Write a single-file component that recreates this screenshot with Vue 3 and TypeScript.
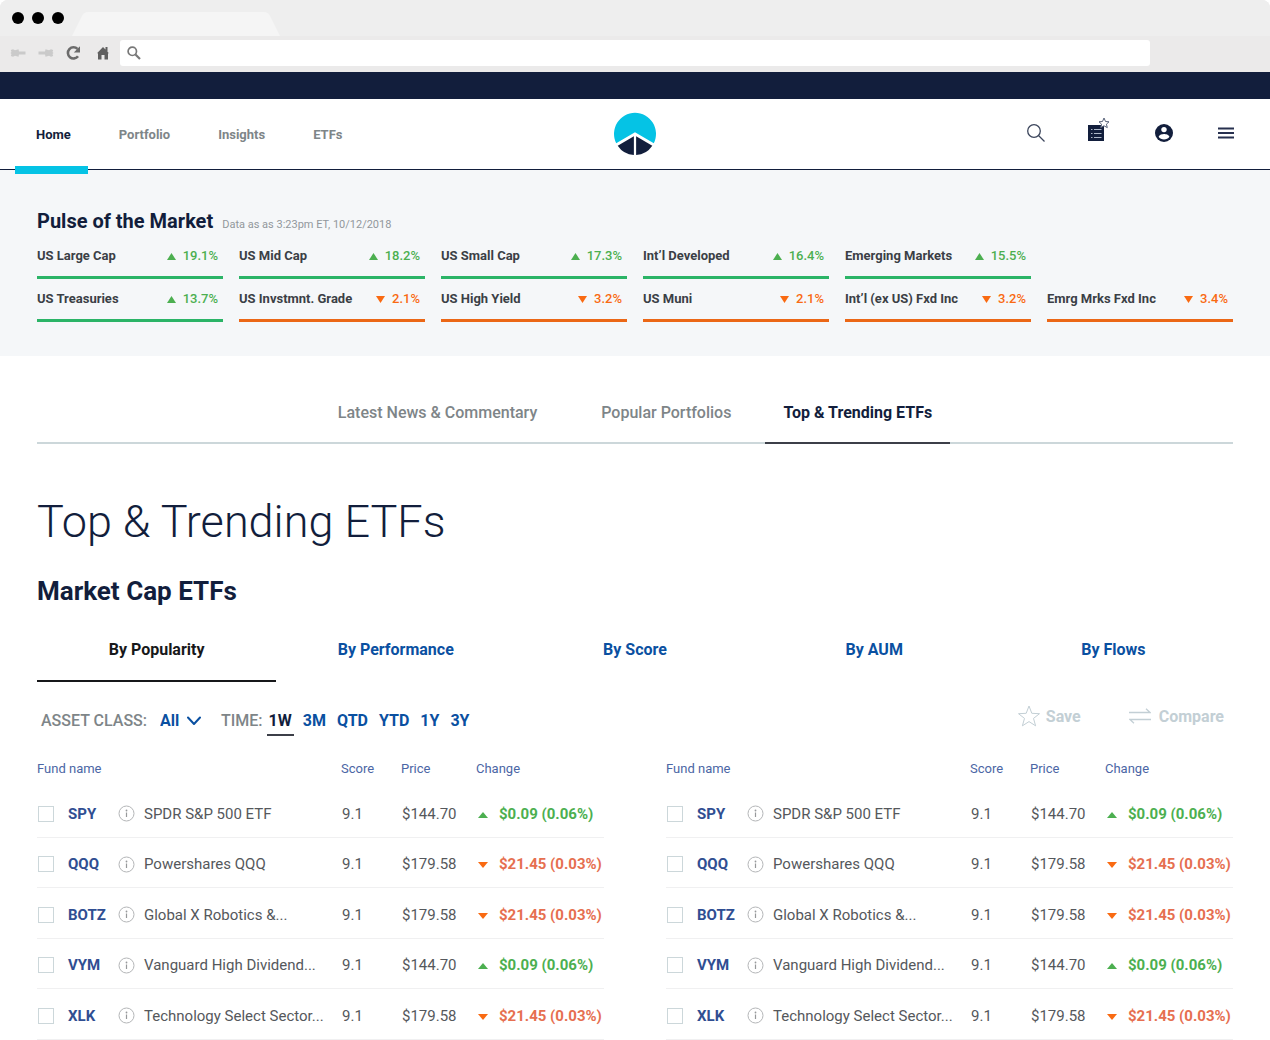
<script setup lang="ts">
import { ref } from 'vue'

interface Market {
  name: string
  change: string
  up: boolean
}

interface Fund {
  ticker: string
  name: string
  score: string
  price: string
  change: string
  up: boolean
}

const navItems = ['Home', 'Portfolio', 'Insights', 'ETFs']
const sections = ['Latest News & Commentary', 'Popular Portfolios', 'Top & Trending ETFs']
const rankings = ['By Popularity', 'By Performance', 'By Score', 'By AUM', 'By Flows']
const periods = ['1W', '3M', 'QTD', 'YTD', '1Y', '3Y']

const activeSection = ref(sections[2])
const activeRanking = ref(rankings[0])
const activePeriod = ref(periods[0])
const assetClass = ref('All')
const address = ref('')

const equityMarkets: Market[] = [
  { name: 'US Large Cap', change: '19.1%', up: true },
  { name: 'US Mid Cap', change: '18.2%', up: true },
  { name: 'US Small Cap', change: '17.3%', up: true },
  { name: 'Int’l Developed', change: '16.4%', up: true },
  { name: 'Emerging Markets', change: '15.5%', up: true },
]

const bondMarkets: Market[] = [
  { name: 'US Treasuries', change: '13.7%', up: true },
  { name: 'US Invstmnt. Grade', change: '2.1%', up: false },
  { name: 'US High Yield', change: '3.2%', up: false },
  { name: 'US Muni', change: '2.1%', up: false },
  { name: 'Int’l (ex US) Fxd Inc', change: '3.2%', up: false },
  { name: 'Emrg Mrks Fxd Inc', change: '3.4%', up: false },
]

const gain = { score: '9.1', price: '$144.70', change: '$0.09 (0.06%)', up: true }
const loss = { score: '9.1', price: '$179.58', change: '$21.45 (0.03%)', up: false }

const funds: Fund[] = [
  { ticker: 'SPY', name: 'SPDR S&P 500 ETF', ...gain },
  { ticker: 'QQQ', name: 'Powershares QQQ', ...loss },
  { ticker: 'BOTZ', name: 'Global X Robotics &...', ...loss },
  { ticker: 'VYM', name: 'Vanguard High Dividend...', ...gain },
  { ticker: 'XLK', name: 'Technology Select Sector...', ...loss },
]

const tables = [funds, funds]
</script>

<template>
  <div class="window">
    <div class="chrome">
      <div class="tab-strip">
        <span class="dot"></span>
        <span class="dot"></span>
        <span class="dot"></span>
        <svg class="browser-tab" width="208" height="24" viewBox="0 0 208 24" aria-hidden="true">
          <path d="M0 24 10 4Q12 0 16 0H192Q196 0 198 4L208 24Z" fill="#f5f5f5" />
        </svg>
      </div>
      <div class="toolbar">
        <button class="tool" aria-label="Back">
          <svg width="16" height="10" viewBox="0 0 16 10"><path d="M.5 5 1.500 4 .8 2 3 1.200 5 2.200 8.500 1.200 9 3.500H15.500V6.500H9L8.500 8.800 5 7.800 3 8.800.8 8 1.500 6Z" fill="#cacaca" /></svg>
        </button>
        <button class="tool" aria-label="Forward">
          <svg width="16" height="10" viewBox="0 0 16 10"><path d="M15.500 5 14.500 4 15.200 2 13 1.200 11 2.200 7.500 1.200 7 3.500H.5V6.500H7L7.500 8.800 11 7.800 13 8.800 15.200 8 14.500 6Z" fill="#cacaca" /></svg>
        </button>
        <button class="tool" aria-label="Reload">
          <svg width="16" height="16" viewBox="0 0 16 16">
            <path d="M12 11.200A5.600 5.600 0 1 1 11.500 3.900" fill="none" stroke="#6b6b6b" stroke-width="2.600" />
            <path d="M14 1.200V7.400H7.800Z" fill="#6b6b6b" />
          </svg>
        </button>
        <button class="tool home" aria-label="Home page">
          <svg width="12" height="14" viewBox="0 0 12 14"><path d="M6 1 8.500 3.600V1H10.500V5.700L12 7.200H11V13.500H7.500V9H4.500V13.500H1V7.200H0Z" fill="#606060" /></svg>
        </button>
        <label class="address">
          <svg width="14" height="14" viewBox="0 0 14 14" aria-hidden="true">
            <circle cx="5.300" cy="5.300" r="4.200" fill="none" stroke="#787878" stroke-width="1.700" />
            <path d="M8.500 8.500 13 13" stroke="#787878" stroke-width="2.200" />
          </svg>
          <input v-model="address" type="text" aria-label="Address" />
        </label>
      </div>
    </div>

    <div class="brand-bar"></div>

    <header class="site-header">
      <nav class="main-nav">
        <a v-for="(item, i) in navItems" :key="item" href="#" :class="['nav-link', { active: i === 0 }]">{{ item }}</a>
      </nav>
      <a class="logo" href="#" aria-label="Home">
        <svg width="44" height="44" viewBox="0 0 44 44">
          <path d="M3.200 31.200A21 21 0 1 1 40.800 31.200L22 20.300Z" fill="#05c3e5" />
          <path d="M4.700 33.700 20.900 24.300V43A21 21 0 0 1 4.700 33.700Z" fill="#121e3c" />
          <path d="M39.300 33.700 23.100 24.300V43A21 21 0 0 0 39.300 33.700Z" fill="#121e3c" />
        </svg>
      </a>
      <div class="header-tools">
        <button class="search" aria-label="Search">
          <svg width="20" height="20" viewBox="0 0 20 20" fill="none" stroke="#3c465c" stroke-width="1.300">
            <circle cx="8" cy="8" r="6.300" /><path d="M12.500 12.500 18.500 18.500" />
          </svg>
        </button>
        <button aria-label="Watchlist">
          <svg width="22" height="32" viewBox="0 0 22 32">
            <path d="M0 8H16V24H0Z" fill="#121e3c" />
            <path d="M3 12.500H4.500M6 12.500H13.500M3 16.500H4.500M6 16.500H13.500M3 20.500H4.500M6 20.500H13.500" stroke="#aeb8c9" stroke-width="1" />
            <path d="M16 1 17.500 4.500 21 4.800 18.400 7.200 19.300 10.600 16 8.800 12.700 10.600 13.600 7.200 11 4.800 14.500 4.500Z" fill="#fff" stroke="#59637a" />
          </svg>
        </button>
        <button aria-label="Account">
          <svg width="18" height="18" viewBox="0 0 18 18">
            <circle cx="9" cy="9" r="9" fill="#121e3c" />
            <circle cx="9" cy="5.600" r="2.700" fill="#fff" />
            <path d="M3.600 12.700C4.200 10.500 7.300 9.900 9 9.900S13.800 10.500 14.400 12.700A6.500 6.500 0 0 1 3.600 12.700Z" fill="#fff" />
          </svg>
        </button>
        <button aria-label="Menu">
          <svg width="16" height="12" viewBox="0 0 16 12"><path d="M0 1.500H16M0 6H16M0 10.500H16" stroke="#27304f" stroke-width="1.800" /></svg>
        </button>
      </div>
    </header>

    <section class="pulse">
      <div class="pulse-head">
        <h2>Pulse of the Market</h2>
        <p>Data as as 3:23pm ET, 10/12/2018</p>
      </div>
      <div v-for="(group, g) in [equityMarkets, bondMarkets]" :key="g" class="market-row">
        <div v-for="m in group" :key="m.name" :class="['market', m.up ? 'up' : 'down']">
          <span class="market-name">{{ m.name }}</span>
          <span class="market-change">
            <svg width="9" height="8" viewBox="0 0 9 8" aria-hidden="true">
              <path :d="m.up ? 'M0 8 4.500 1 9 8Z' : 'M0 1 4.500 8 9 1Z'" fill="currentColor" />
            </svg>
            {{ m.change }}
          </span>
        </div>
      </div>
    </section>

    <main class="content">
      <div class="section-tabs">
        <button
          v-for="s in sections"
          :key="s"
          :class="['section-tab', { active: s === activeSection }]"
          @click="activeSection = s"
        >{{ s }}</button>
      </div>

      <h1>Top &amp; Trending ETFs</h1>
      <h2 class="subtitle">Market Cap ETFs</h2>

      <div class="rankings">
        <button
          v-for="r in rankings"
          :key="r"
          :class="['ranking', { active: r === activeRanking }]"
          @click="activeRanking = r"
        >{{ r }}</button>
      </div>

      <div class="controls">
        <div class="filters">
          <label class="filter-label" for="asset-class">ASSET CLASS:</label>
          <div class="asset-select">
            <select id="asset-class" v-model="assetClass">
              <option>All</option>
            </select>
            <svg width="14" height="10" viewBox="0 0 14 10" aria-hidden="true">
              <path d="M1 1.500 7 8 13 1.500" fill="none" stroke="#0a50a1" stroke-width="2" stroke-linecap="round" stroke-linejoin="round" />
            </svg>
          </div>
          <span class="filter-label">TIME:</span>
          <div class="periods">
            <button
              v-for="p in periods"
              :key="p"
              :class="['period', { active: p === activePeriod }]"
              @click="activePeriod = p"
            >{{ p }}</button>
          </div>
        </div>
        <div class="actions">
          <button>
            <svg width="22" height="22" viewBox="0 0 22 22" fill="none" stroke="#c3cfd5">
              <path d="M11 1 13.800 8.300 21.500 8.700 15.500 13.400 17.600 20.800 11 16.600 4.400 20.800 6.500 13.400.5 8.700 8.200 8.300Z" />
            </svg>
            Save
          </button>
          <button class="compare">
            <svg width="22" height="16" viewBox="0 0 22 16" fill="none" stroke="#c3cfd5" stroke-width="1.300">
              <path d="M0 4.500H21L17 .8M22 11.500H1L5 15.200" />
            </svg>
            Compare
          </button>
        </div>
      </div>

      <div class="tables">
        <table v-for="(rows, t) in tables" :key="t">
          <colgroup>
            <col class="c-check" /><col class="c-ticker" /><col class="c-name" />
            <col class="c-score" /><col class="c-price" /><col class="c-change" />
          </colgroup>
          <thead>
            <tr>
              <th colspan="3" scope="col">Fund name</th>
              <th scope="col">Score</th>
              <th scope="col">Price</th>
              <th scope="col">Change</th>
            </tr>
          </thead>
          <tbody>
            <tr v-for="f in rows" :key="f.ticker">
              <td><input type="checkbox" :aria-label="`Select ${f.ticker}`" /></td>
              <td><a class="ticker" href="#">{{ f.ticker }}</a></td>
              <td>
                <div class="fund">
                  <button :aria-label="`About ${f.name}`">
                    <svg width="17" height="17" viewBox="0 0 17 17">
                      <circle cx="8.500" cy="8.500" r="7.500" fill="none" stroke="#b4b6b8" />
                      <path d="M8.500 7.500V12" stroke="#97999b" stroke-width="1.200" />
                      <circle cx="8.500" cy="5.500" r=".9" fill="#97999b" />
                    </svg>
                  </button>
                  <span>{{ f.name }}</span>
                </div>
              </td>
              <td class="num">{{ f.score }}</td>
              <td class="num">{{ f.price }}</td>
              <td>
                <div :class="['change', f.up ? 'up' : 'down']">
                  <svg width="12" height="10" viewBox="0 0 12 10" aria-hidden="true">
                    <path :d="f.up ? 'M1 9 6 3 11 9Z' : 'M1 3 6 9 11 3Z'" />
                  </svg>
                  {{ f.change }}
                </div>
              </td>
            </tr>
          </tbody>
        </table>
      </div>
    </main>
  </div>
</template>

<style>
body {
  margin: 0;
  background: #fff;
}
</style>

<style scoped>
.window {
  font-family: Roboto, "Liberation Sans", sans-serif;
  color: #121e3c;
}
.window * {
  box-sizing: border-box;
}
button,
select,
input {
  font: inherit;
  color: inherit;
  background: none;
  border: 0;
  padding: 0;
  margin: 0;
}
button {
  cursor: pointer;
}
a {
  color: inherit;
  text-decoration: none;
}
svg {
  display: block;
  flex: none;
}
h1,
h2,
p {
  margin: 0;
}

/* browser frame */
.chrome {
  background: #ebeaea;
  border-radius: 8px 8px 0 0;
}
.tab-strip {
  display: flex;
  align-items: center;
  gap: 8px;
  height: 36px;
  padding-left: 12px;
  background: #eeeeee;
  border-radius: 8px 8px 0 0;
}
.dot {
  width: 12px;
  height: 12px;
  border-radius: 50%;
  background: #000;
}
.browser-tab {
  align-self: flex-end;
}
.toolbar {
  display: flex;
  align-items: center;
  height: 36px;
  gap: 12px;
  padding: 0 120px 2px 10px;
}
.home {
  margin: 0 -1px 0 3px;
}
.address {
  display: flex;
  align-items: center;
  gap: 8px;
  flex: 1;
  height: 26px;
  padding: 0 7px;
  background: #fff;
  border-radius: 3px;
}
.address input {
  flex: 1;
  font-size: 13px;
  outline: 0;
}

/* site header */
.brand-bar {
  height: 27px;
  background: #121e3c;
}
.site-header {
  display: grid;
  grid-template-columns: 1fr auto 1fr;
  align-items: center;
  height: 71px;
  border-bottom: 1px solid #121e3c;
}
.main-nav {
  display: flex;
  gap: 10px;
  height: 70px;
  padding-left: 15px;
}
.nav-link {
  position: relative;
  padding: 0 17px 0 21px;
  font-size: 13px;
  font-weight: 700;
  line-height: 72px;
  color: #7e8588;
}
.nav-link.active {
  color: #121e3c;
}
.nav-link.active::after {
  content: "";
  position: absolute;
  left: 0;
  right: 0;
  bottom: -5px;
  height: 8px;
  background: #05c3e5;
}
.header-tools {
  display: flex;
  justify-content: flex-end;
  align-items: center;
  gap: 45px;
  padding: 0 36px 2px 0;
}
.search {
  margin-right: -3px;
}

/* market summary */
.pulse {
  padding: 39px 37px 34px;
  background: #f5f7f9;
}
.pulse-head {
  display: flex;
  align-items: baseline;
  gap: 9px;
  margin-bottom: 15px;
}
.pulse-head h2 {
  font-size: 20px;
  line-height: 24px;
}
.pulse-head p {
  font-size: 11px;
  color: #92979c;
}
.market-row {
  display: grid;
  grid-template-columns: repeat(6, 1fr);
  gap: 16px;
}
.market-row + .market-row {
  margin-top: 12px;
}
.market {
  display: flex;
  justify-content: space-between;
  padding: 0 5px 12px 0;
  border-bottom: 3px solid;
  font-size: 13px;
  line-height: 16px;
  white-space: nowrap;
}
.market.up {
  border-color: #2bb467;
}
.market.down {
  border-color: #eb6716;
}
.market-name {
  font-weight: 700;
  color: #3b3f46;
}
.market-change {
  display: flex;
  align-items: center;
  gap: 7px;
  font-weight: 500;
}
.up {
  color: #4caf50;
}
.down {
  color: #f96a12;
}

/* main content */
.content {
  padding: 36px 37px 0;
}
.section-tabs {
  display: flex;
  justify-content: center;
  gap: 16px;
  border-bottom: 2px solid #ccd7da;
}
.section-tab {
  margin-bottom: -2px;
  padding: 11px 18px 19px;
  border-bottom: 2px solid transparent;
  font-size: 16px;
  font-weight: 500;
  line-height: 20px;
  color: #7e8588;
}
.section-tab:first-child {
  margin-right: 12px;
}
.section-tab.active {
  border-color: #3c3f48;
  font-weight: 700;
  color: #121e3c;
}
h1 {
  margin-top: 50px;
  font-size: 45px;
  font-weight: 300;
  line-height: 56px;
}
.subtitle {
  margin-top: 25px;
  font-size: 26px;
  line-height: 32px;
}
.rankings {
  display: grid;
  grid-template-columns: repeat(5, 1fr);
  margin-top: 33px;
}
.ranking {
  padding-bottom: 20px;
  border-bottom: 2px solid transparent;
  font-size: 16px;
  font-weight: 700;
  line-height: 20px;
  color: #0a50a1;
}
.ranking.active {
  border-color: #17181a;
  color: #17181a;
}
.controls {
  display: flex;
  justify-content: space-between;
  height: 33px;
  margin-top: 21px;
}
.filters {
  display: flex;
  align-items: flex-end;
  padding-left: 4px;
  font-size: 16px;
  line-height: 26px;
  font-weight: 700;
}
.filter-label {
  padding-bottom: 2px;
  font-weight: 500;
  color: #7e8588;
}
.asset-select {
  display: flex;
  align-items: center;
  margin: 0 20px 2px 13px;
  color: #0a50a1;
}
.asset-select select {
  width: 41px;
  height: 26px;
  margin-right: -14px;
  appearance: none;
}
.asset-select svg {
  pointer-events: none;
}
.periods {
  display: flex;
  gap: 7px;
  margin-left: 4px;
}
.period {
  padding: 0 2px;
  border-bottom: 2px solid transparent;
  color: #0a50a1;
}
.period.active {
  border-color: #3c3f48;
  color: #121e3c;
}
.actions {
  display: flex;
  gap: 48px;
  height: 26px;
  padding-right: 9px;
}
.actions button {
  display: flex;
  align-items: center;
  gap: 6px;
  font-size: 16px;
  font-weight: 700;
  color: #c3cfd5;
}
.actions .compare {
  gap: 8px;
}

/* fund tables */
.tables {
  display: grid;
  grid-template-columns: 1fr 1fr;
  gap: 62px;
  margin-top: 15px;
}
table {
  width: 100%;
  table-layout: fixed;
  border-collapse: separate;
  border-spacing: 0;
}
.c-check { width: 31px; }
.c-ticker { width: 50px; }
.c-score { width: 60px; }
.c-price { width: 75px; }
.c-change { width: 128px; }
th {
  height: 36px;
  padding: 0 0 2px;
  font-size: 13px;
  font-weight: 400;
  text-align: left;
  color: #4b66a5;
}
td {
  height: 51px;
  padding: 3px 0 0;
  border-bottom: 1px solid #f0f0f1;
  font-size: 15px;
  line-height: 20px;
  white-space: nowrap;
}
tr:nth-child(even) td {
  height: 50px;
}
td input {
  display: block;
  width: 16px;
  height: 16px;
  margin-left: 1px;
  appearance: none;
  background: #fff;
  border: 1px solid #ccd7da;
}
td input:checked {
  background: #0a50a1;
}
.ticker {
  font-weight: 700;
  color: #304e92;
}
.fund {
  display: flex;
  align-items: center;
  gap: 9px;
  color: #55585c;
}
.num {
  padding-left: 1px;
  color: #55585c;
}
.change {
  display: flex;
  align-items: center;
  gap: 10px;
  padding-left: 1px;
  font-weight: 700;
}
.change.down {
  color: #e66f50;
}
.change svg {
  fill: #4caf50;
}
.change.down svg {
  fill: #f96a12;
}
</style>
